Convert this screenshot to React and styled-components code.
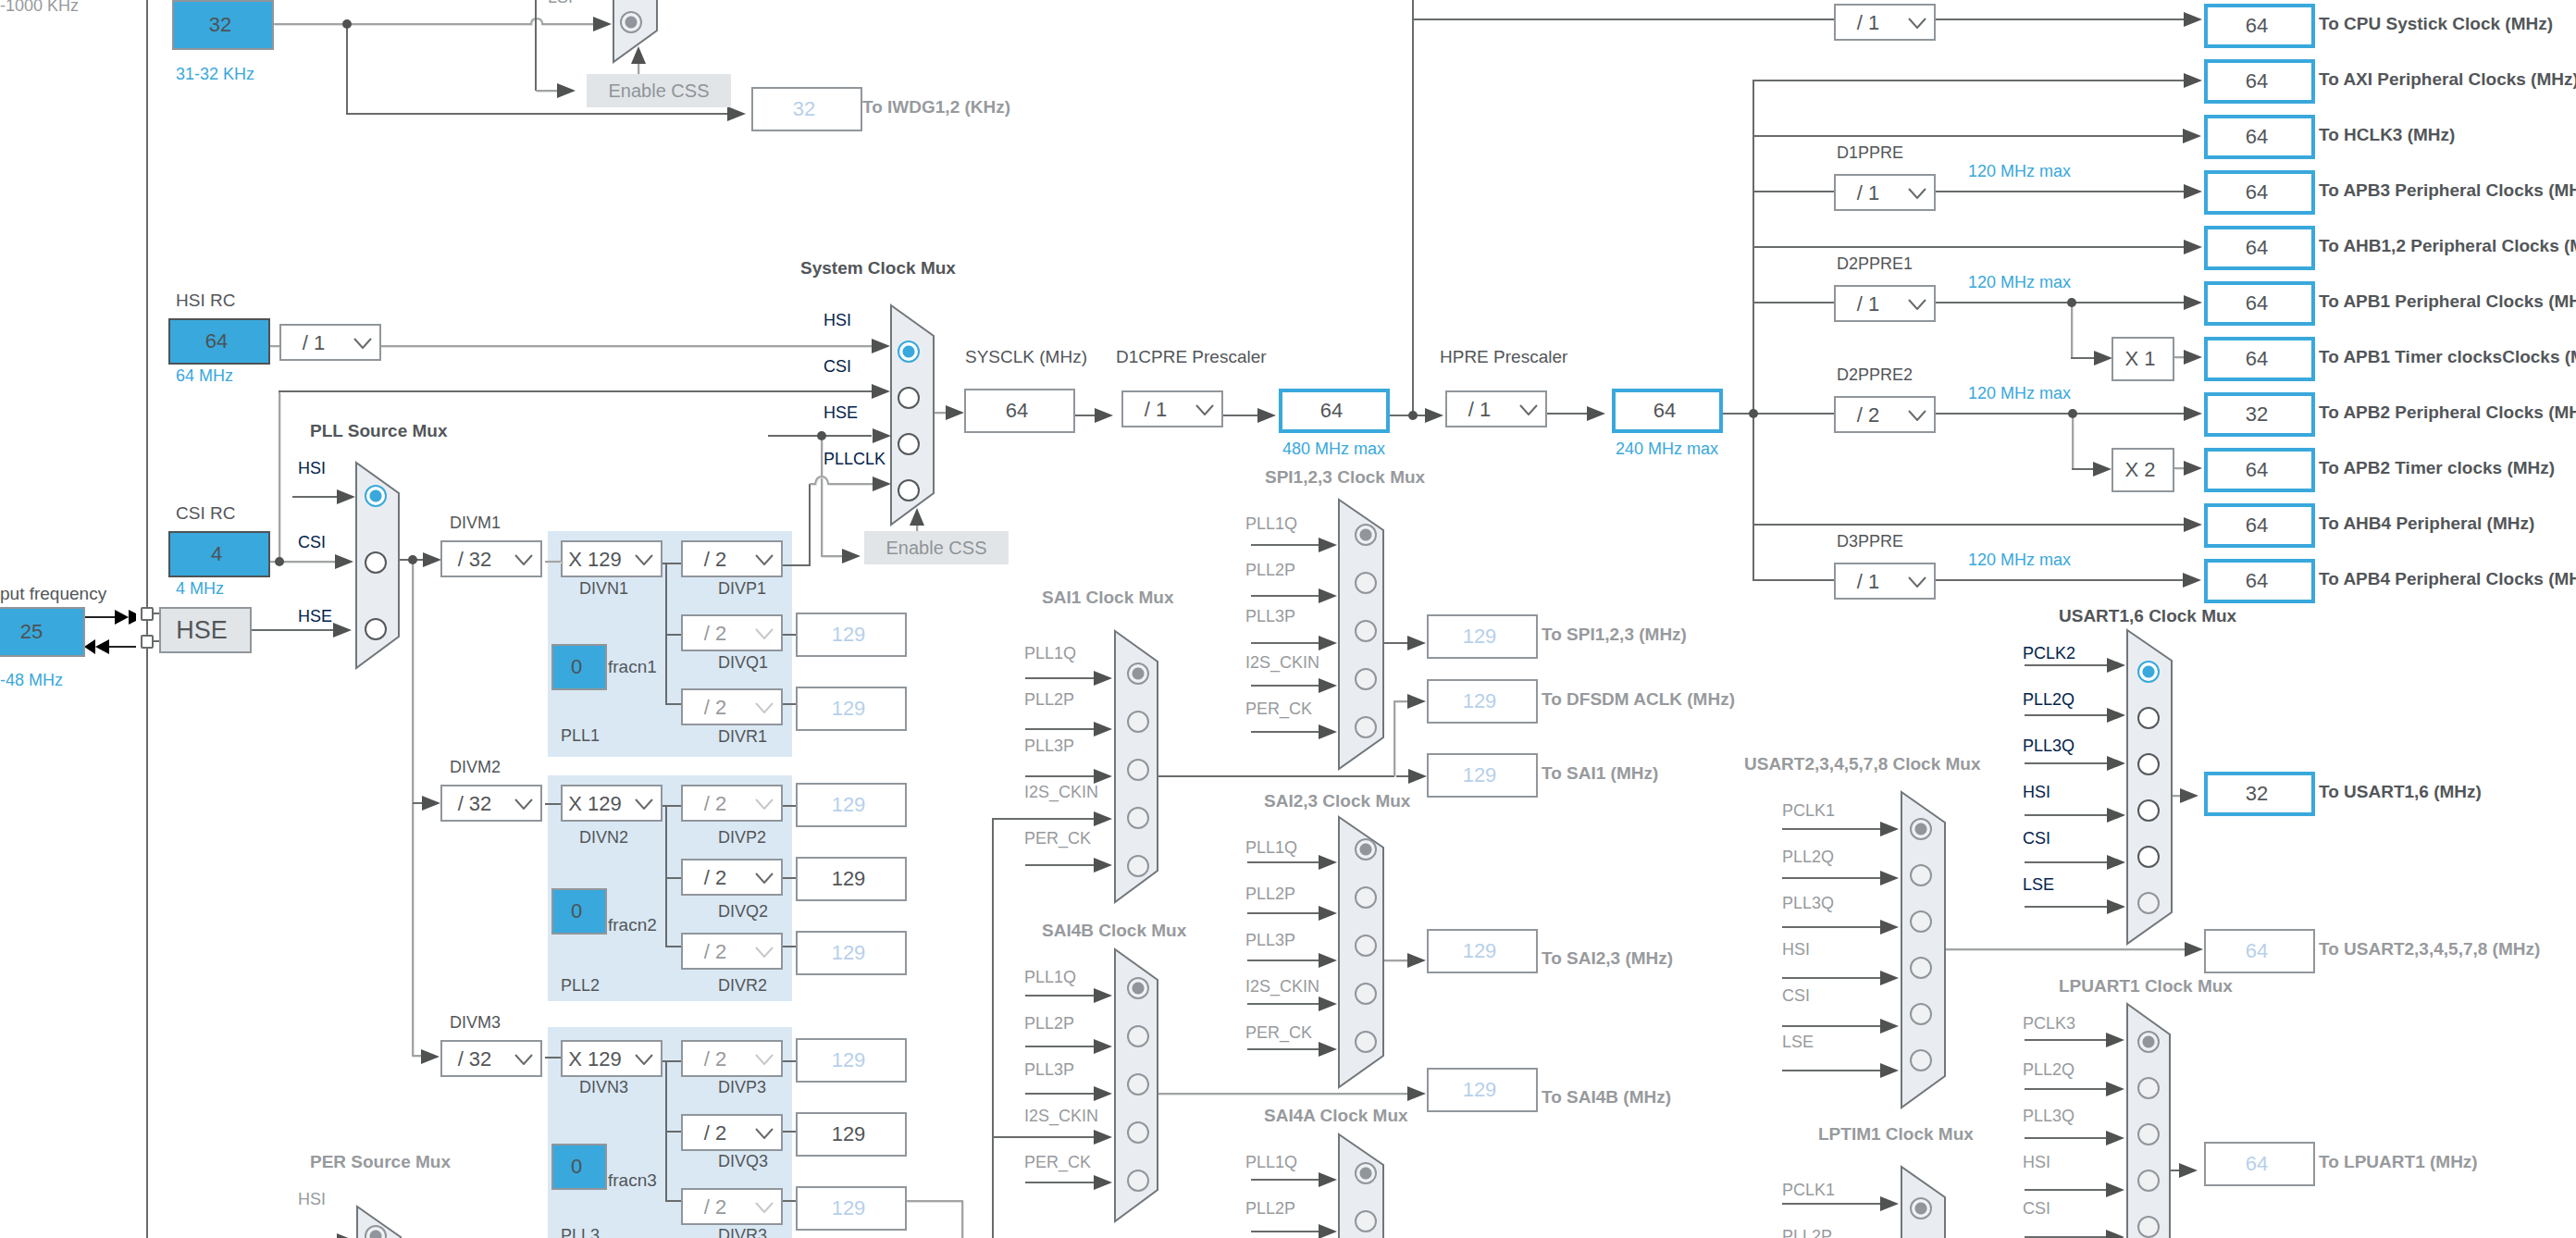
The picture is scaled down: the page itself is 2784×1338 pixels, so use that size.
import React, { useState } from 'react';
import styled, { createGlobalStyle, css } from 'styled-components';

const colors = {
  blue: '#39a8dc',
  navy: '#03234b',
  text: '#525659',
  muted: '#979a9d',
  pale: '#b7d0ea',
  border: '#90969b',
  wire: '#686b6b',
  arrow: '#4f5251',
  panel: '#dae8f4',
  mux: '#e9edf1',
  button: '#e1e5e8',
};

const GlobalStyle = createGlobalStyle`
  * {
    box-sizing: border-box;
  }

  body {
    margin: 0;
    background: #fff;
    font-family: "Liberation Sans", Arial, sans-serif;
  }

  input, select, button {
    margin: 0;
    padding: 0;
    font-family: inherit;
    border-radius: 0;
  }
`;

const Canvas = styled.main`
  position: relative;
  width: 100%;
  min-height: 100vh;
  overflow: hidden;
  background: #fff;
`;

// a block of the diagram, free on the canvas; its content flows inside it
const node = css`
  position: absolute;
  left: ${props => props.$x}px;
  top: ${props => props.$y}px;
  display: flex;
`;

const Wiring = styled.svg`
  position: absolute;
  inset: 0;
  width: 100%;
  height: 100%;
  fill: none;
  pointer-events: none;
`;

const Text = styled.label`
  color: ${props => colors[props.$tone || 'text']};
  font-size: ${props => (props.$wide ? 19 : 18)}px;
  font-weight: ${props => (props.$bold ? 700 : 400)};
  line-height: 20px;
  white-space: nowrap;
`;

const Field = styled.input`
  flex: none;
  width: ${props => props.$w || 120}px;
  height: ${props => props.$h || 48}px;
  padding-right: 6px;
  border: 2px solid ${colors.border};
  background: #fff;
  color: ${colors.text};
  font-size: 22px;
  text-align: center;
  outline: none;

  &:disabled {
    color: ${colors.pale};
    opacity: 1;
  }

  ${props => props.$kind === 'target' && css`
    border: 4px solid ${colors.blue};
  `}

  ${props => props.$kind === 'source' && css`
    background: ${colors.blue};
    border-color: ${props.$dark ? '#4d5356' : colors.border};
    color: #4d5356;
  `}
`;

const DividerBox = styled.div`
  position: relative;
  flex: none;
  width: 110px;
  height: 40px;

  select {
    width: 100%;
    height: 100%;
    padding-right: 36px;
    border: 2px solid ${colors.border};
    background: #fff;
    color: ${colors.text};
    font-size: 22px;
    text-align: center;
    text-align-last: center;
    appearance: none;
    outline: none;
  }

  select:disabled {
    color: ${colors.muted};
    opacity: 1;
  }

  svg {
    position: absolute;
    right: 10px;
    top: 15px;
    width: 20px;
    height: 12px;
    fill: none;
    stroke: ${props => (props.$off ? '#c6c9cb' : '#686b6b')};
    stroke-width: 2;
    pointer-events: none;
  }
`;

const Title = styled.div`
  ${node}
`;

const DividerNode = styled.div`
  ${node}
`;

const ButtonNode = styled.div`
  ${node}
`;

const CssButton = styled.button`
  width: 156px;
  height: 36px;
  border: none;
  background: ${colors.button};
  color: #8f9499;
  font-size: 20px;
`;

const HseButton = styled.button`
  width: 100px;
  height: 50px;
  padding-right: 8px;
  border: 2px solid ${colors.border};
  background: ${colors.button};
  color: ${colors.text};
  font-size: 27px;
`;

// oscillator: caption, frequency box, allowed range
const SourceBlock = styled.div`
  ${node}
  flex-direction: column;

  label {
    padding: 0 0 ${props => props.$above || 9}px ${props => props.$indent}px;
  }

  span {
    padding: ${props => props.$below || 2}px 0 0 ${props => props.$indent}px;
  }
`;

// SYSCLK -> D1CPRE -> HPRE row
const ClockChain = styled.section`
  ${node}
`;

const ChainStep = styled.div`
  display: flex;
  flex-direction: column;
  width: ${props => props.$w}px;
`;

const StepTitle = styled.div`
  height: 44px;
  margin-left: ${props => (props.$out ? -6 : 1)}px;
`;

const StepControl = styled.div`
  height: 55px;

  ${DividerBox} {
    margin-top: 2px;
  }
`;

const StepNote = styled.div`
  padding-left: 4px;
`;

const PrescalerList = styled.section`
  ${node}
  flex-direction: column;
  gap: 47px;
`;

const PrescalerRow = styled.div`
  display: flex;
  align-items: flex-start;
  gap: 35px;

  > div {
    display: flex;
    flex-direction: column;
    gap: 13px;
  }

  > div > label {
    padding-left: 3px;
  }

  > span {
    padding-top: 20px;
  }
`;

const MultiplierList = styled.section`
  ${node}
  flex-direction: column;
  gap: 72px;
`;

const PllSection = styled.section`
  ${node}
  align-items: flex-start;
`;

const DivmColumn = styled.div`
  display: flex;
  flex-direction: column;
  gap: 9px;
  width: 116px;

  label {
    padding-left: 10px;
  }
`;

const Panel = styled.div`
  display: flex;
  width: 264px;
  height: 244px;
  margin-top: ${props => props.$drop}px;
  padding-top: ${props => 29 - props.$drop}px;
  background: ${colors.panel};
`;

const MultiplierColumn = styled.div`
  display: flex;
  flex-direction: column;
  width: 144px;
  padding-left: 14px;
`;

const CaptionText = styled(Text)`
  padding-top: ${props => props.$gap}px;
  padding-left: ${props => props.$indent}px;
`;

const FracRow = styled.div`
  display: flex;
  align-items: ${props => (props.$low ? 'flex-end' : 'center')};
  gap: 1px;
  margin: ${props => props.$above}px 0 ${props => props.$below}px -10px;
`;

const PostDividers = styled.div`
  display: flex;
  flex-direction: column;
`;

const PostDivider = styled.div`
  display: flex;
  flex: none;
  flex-direction: column;
  height: 80px;
`;

const PllOutputs = styled.div`
  display: flex;
  flex-direction: column;
  gap: 32px;
  padding: 27px 0 0 4px;
`;

const EmptySlot = styled.div`
  height: 48px;
`;

const SignalList = styled.div`
  ${node}
  flex-direction: column;
  gap: ${props => props.$step - 20}px;
`;

const RadioList = styled.div`
  ${node}
  flex-direction: column;
  gap: ${props => props.$step - 24}px;
`;

const Radio = styled.input`
  width: 24px;
  height: 24px;
  appearance: none;
  border: 2px solid #55595c;
  border-radius: 50%;
  background: #fff;

  &:checked {
    border-color: ${colors.blue};
    background: radial-gradient(circle, ${colors.blue} 6px, #fff 7px);
  }

  &:disabled {
    border-color: ${colors.border};
    background: #f0f1f3;
  }

  &:disabled:checked {
    background: radial-gradient(circle, ${colors.border} 6px, #f0f1f3 7px);
  }
`;

const OutputList = styled.section`
  ${node}
  flex-direction: column;
  gap: 12px;
`;

const OutputRow = styled.div`
  display: flex;
  align-items: ${props => (props.$low ? 'flex-end' : 'center')};
  gap: ${props => (props.$tight ? 0 : 4)}px;

  label {
    padding-bottom: ${props => (props.$low ? 6 : 4)}px;
  }
`;

function Arrow({ x, y, up }) {
  const points = up
    ? `${x},${y} ${x - 8},${y + 19} ${x + 8},${y + 19}`
    : `${x},${y} ${x - 20},${y - 8} ${x - 20},${y + 8}`;
  return <polygon points={points} fill={colors.arrow} />;
}

function Wire({ d, soft }) {
  if (soft) {
    return (
      <>
        <path d={d} stroke="#dfe1e1" strokeWidth="2" transform="translate(1 1)" />
        <path d={d} stroke="#a2a4a4" strokeWidth="2" />
      </>
    );
  }
  return <path d={d} stroke={colors.wire} strokeWidth="2" />;
}

function Divider({ id, label, value, off }) {
  return (
    <DividerBox $off={off}>
      <select id={id} aria-label={label} defaultValue={value} disabled={off}>
        <option>{value}</option>
      </select>
      <svg viewBox="0 0 20 12">
        <path d="M1 1 L10 11 L19 1" />
      </svg>
    </DividerBox>
  );
}

function Mux({ data }) {
  const { id, title, titleX, titleY, labelX, labelY, labelStep = 50, radioX, radioY, radioStep = 50, signals, off, lastOff } = data;
  const [selected, setSelected] = useState(0);

  return (
    <div role="radiogroup" aria-label={title}>
      {title && (
        <Title $x={titleX} $y={titleY - 10}>
          <Text as="span" $bold $wide $tone={off ? 'muted' : 'text'}>{title}</Text>
        </Title>
      )}
      <SignalList $x={labelX} $y={labelY - 10} $step={labelStep}>
        {signals.map((signal, i) => (
          <Text key={signal} htmlFor={`${id}-${i}`} $tone={off ? 'muted' : 'navy'}>
            {signal}
          </Text>
        ))}
      </SignalList>
      <RadioList $x={radioX - 12} $y={radioY - 12} $step={radioStep}>
        {signals.map((signal, i) => (
          <Radio
            key={signal}
            type="radio"
            id={`${id}-${i}`}
            name={id}
            checked={selected === i}
            disabled={off || (lastOff && i === signals.length - 1)}
            onChange={() => setSelected(i)}
          />
        ))}
      </RadioList>
    </div>
  );
}

const kernel = ['PLL1Q', 'PLL2P', 'PLL3P', 'I2S_CKIN', 'PER_CK'];

// shape: [left, right, top, bottom]; inputs: [start, tip, [y, ...]]
const muxes = [
  {
    id: 'iwdg', signals: ['LSI'], labelX: 592, labelY: -3, radioX: 682, radioY: 24, off: true,
    shape: [663, 710, -80, 67],
  },
  {
    id: 'sys', title: 'System Clock Mux', titleX: 865, titleY: 290,
    labelX: 890, labelY: 346, radioX: 982, radioY: 380,
    signals: ['HSI', 'CSI', 'HSE', 'PLLCLK'],
    shape: [963, 1009, 330, 567],
  },
  {
    id: 'pllsrc', title: 'PLL Source Mux', titleX: 335, titleY: 466,
    labelX: 322, labelY: 506, labelStep: 80, radioX: 406, radioY: 536, radioStep: 72,
    signals: ['HSI', 'CSI', 'HSE'],
    shape: [385, 431, 500, 722],
  },
  {
    id: 'per', title: 'PER Source Mux', titleX: 335, titleY: 1256, off: true,
    labelX: 322, labelY: 1296, radioX: 406, radioY: 1336, signals: ['HSI'],
    shape: [386, 433, 1304, 1530], inputs: [316, 384, [1341]],
  },
  {
    id: 'spi', title: 'SPI1,2,3 Clock Mux', titleX: 1367, titleY: 516, off: true,
    labelX: 1346, labelY: 566, radioX: 1476, radioY: 578, radioStep: 52, signals: kernel,
    shape: [1447, 1495, 540, 831], inputs: [1352, 1445, [589, 644, 695, 741, 791]],
  },
  {
    id: 'sai1', title: 'SAI1 Clock Mux', titleX: 1126, titleY: 646, off: true,
    labelX: 1107, labelY: 706, radioX: 1230, radioY: 728, radioStep: 52, signals: kernel,
    shape: [1205, 1251, 682, 975], inputs: [1108, 1202, [733, 788, 839, 885, 935]],
  },
  {
    id: 'sai23', title: 'SAI2,3 Clock Mux', titleX: 1366, titleY: 866, off: true,
    labelX: 1346, labelY: 916, radioX: 1476, radioY: 918, radioStep: 52, signals: kernel,
    shape: [1447, 1495, 883, 1175], inputs: [1348, 1445, [932, 987, 1038, 1085, 1134]],
  },
  {
    id: 'sai4b', title: 'SAI4B Clock Mux', titleX: 1126, titleY: 1006, off: true,
    labelX: 1107, labelY: 1056, radioX: 1230, radioY: 1068, radioStep: 52, signals: kernel,
    shape: [1205, 1251, 1026, 1320], inputs: [1108, 1202, [1076, 1131, 1182, 1229, 1278]],
  },
  {
    id: 'sai4a', title: 'SAI4A Clock Mux', titleX: 1366, titleY: 1206, off: true,
    labelX: 1346, labelY: 1256, radioX: 1476, radioY: 1268, radioStep: 52, signals: ['PLL1Q', 'PLL2P'],
    shape: [1447, 1495, 1226, 1518], inputs: [1352, 1445, [1275, 1331]],
  },
  {
    id: 'usart2', title: 'USART2,3,4,5,7,8 Clock Mux', titleX: 1885, titleY: 826, off: true,
    labelX: 1926, labelY: 876, radioX: 2076, radioY: 896,
    signals: ['PCLK1', 'PLL2Q', 'PLL3Q', 'HSI', 'CSI', 'LSE'],
    shape: [2055, 2102, 856, 1197], inputs: [1926, 2052, [896, 949, 1002, 1057, 1109, 1157]],
  },
  {
    id: 'usart1', title: 'USART1,6 Clock Mux', titleX: 2225, titleY: 666, lastOff: true,
    labelX: 2186, labelY: 706, radioX: 2322, radioY: 726,
    signals: ['PCLK2', 'PLL2Q', 'PLL3Q', 'HSI', 'CSI', 'LSE'],
    shape: [2299, 2347, 681, 1020], inputs: [2188, 2297, [719, 773, 825, 881, 932, 980]],
  },
  {
    id: 'lpuart1', title: 'LPUART1 Clock Mux', titleX: 2225, titleY: 1066, off: true,
    labelX: 2186, labelY: 1106, radioX: 2322, radioY: 1126,
    signals: ['PCLK3', 'PLL2Q', 'PLL3Q', 'HSI', 'CSI'],
    shape: [2299, 2345, 1085, 1424], inputs: [2188, 2296, [1124, 1177, 1230, 1286, 1337]],
  },
  {
    id: 'lptim1', title: 'LPTIM1 Clock Mux', titleX: 1965, titleY: 1226, off: true,
    labelX: 1926, labelY: 1286, radioX: 2076, radioY: 1306, signals: ['PCLK1', 'PLL2P'],
    shape: [2055, 2102, 1261, 1600], inputs: [1926, 2052, [1301]],
  },
];

const wires = [
  // chip border
  { d: 'M159 0 V1400' },
  // LSI
  { d: 'M296 26 H574 Q574 20 580 20 Q586 20 586 26 H642', soft: true },
  { d: 'M375 26 V123 H788' },
  { d: 'M579 0 V98' },
  { d: 'M579 98 H602', soft: true },
  { d: 'M690 68 V80', soft: true },
  // HSI, CSI, HSE and PLLCLK into the system mux
  { d: 'M292 374 H942', soft: true },
  { d: 'M302 606 V424', soft: true },
  { d: 'M301 423 H942' },
  { d: 'M830 471 H942' },
  { d: 'M888 471 V601 H912', soft: true },
  { d: 'M846 611 H875 V523' },
  { d: 'M875 523 H881 Q882 515 888 515 Q894 515 895 523 H944', soft: true },
  { d: 'M991 566 V574', soft: true },
  { d: 'M1009 446 H1024', soft: true },
  { d: 'M1162 449 H1185' },
  { d: 'M1322 449 H1360' },
  { d: 'M1502 449 H1540' },
  { d: 'M1672 447 H1716' },
  { d: 'M1862 447 H2362' },
  // PLL sources
  { d: 'M316 537 H365' },
  { d: 'M292 607 H363', soft: true },
  { d: 'M272 681 H362' },
  { d: 'M431 605 H459' },
  { d: 'M446 605 V1141 H457', soft: true },
  { d: 'M446 868 H457' },
  // system and peripheral rails
  { d: 'M1527 0 V449' },
  { d: 'M1527 21 H2362' },
  { d: 'M1895 627 V87 H2362' },
  { d: 'M1895 147 H2362' },
  { d: 'M1895 207 H2362' },
  { d: 'M1895 267 H2362' },
  { d: 'M1895 327 H2362' },
  { d: 'M1895 567 H2362' },
  { d: 'M1894 627 H2362' },
  { d: 'M2239 327 V387', soft: true },
  { d: 'M2238 387 H2265' },
  { d: 'M2240 447 V507', soft: true },
  { d: 'M2239 507 H2264' },
  { d: 'M2350 386 H2362', soft: true },
  { d: 'M2350 506 H2362', soft: true },
  // kernel clocks
  { d: 'M1495 695 H1524' },
  { d: 'M1251 839 H1524' },
  { d: 'M1507 839 V758 H1524', soft: true },
  { d: 'M1495 1038 H1524', soft: true },
  { d: 'M1251 1182 H1524', soft: true },
  { d: 'M1110 885 H1073 V1400 M1073 1229 H1110' },
  { d: 'M980 1298 H1040 V1400', soft: true },
  { d: 'M2102 1026 H2364', soft: true },
  { d: 'M2347 860 H2358', soft: true },
  { d: 'M2345 1265 H2358' },
];

const arrows = [
  [661, 26], [806, 123], [622, 98],
  [962, 374], [962, 423], [963, 471], [963, 523], [930, 601],
  [1042, 446], [1203, 449], [1379, 449], [1560, 449], [1735, 447],
  [384, 537], [382, 607], [380, 681], [477, 605], [476, 868], [475, 1142],
  [2380, 21], [2380, 87], [2379, 147], [2380, 207], [2380, 267], [2380, 327],
  [2380, 386], [2380, 447], [2380, 506], [2380, 567], [2379, 627],
  [2283, 387], [2282, 507],
  [1541, 695], [1541, 758], [1542, 839], [1541, 1038], [1541, 1182],
  [2381, 1026], [2376, 860], [2375, 1265],
];

const dots = [
  [375, 26], [888, 471], [302, 607], [446, 605],
  [1527, 449], [1895, 447], [2239, 327], [2240, 447],
];

const outputGroups = [
  {
    x: 2382,
    y: 4,
    items: [
      { id: 'systick', value: 64, label: 'To CPU Systick Clock (MHz)' },
      { id: 'axi', value: 64, label: 'To AXI Peripheral Clocks (MHz)' },
      { id: 'hclk3', value: 64, label: 'To HCLK3 (MHz)' },
      { id: 'apb3', value: 64, label: 'To APB3 Peripheral Clocks (MHz)' },
      { id: 'ahb12', value: 64, label: 'To AHB1,2 Peripheral Clocks (MHz)' },
      { id: 'apb1', value: 64, label: 'To APB1 Peripheral Clocks (MHz)' },
      { id: 'apb1t', value: 64, label: 'To APB1 Timer clocksClocks (MHz)' },
      { id: 'apb2', value: 32, label: 'To APB2 Peripheral Clocks (MHz)' },
      { id: 'apb2t', value: 64, label: 'To APB2 Timer clocks (MHz)' },
      { id: 'ahb4', value: 64, label: 'To AHB4 Peripheral (MHz)' },
      { id: 'apb4', value: 64, label: 'To APB4 Peripheral Clocks (MHz)' },
    ],
  },
  { x: 2382, y: 834, items: [{ id: 'out-usart1', value: 32, label: 'To USART1,6 (MHz)' }] },
  { x: 2382, y: 1004, items: [{ id: 'out-usart2', value: 64, label: 'To USART2,3,4,5,7,8 (MHz)', off: true }] },
  { x: 2382, y: 1234, items: [{ id: 'out-lpuart1', value: 64, label: 'To LPUART1 (MHz)', off: true }] },
  { x: 1542, y: 664, items: [{ id: 'out-spi', value: 129, label: 'To SPI1,2,3 (MHz)', off: true }] },
  { x: 1542, y: 734, items: [{ id: 'out-dfsdm', value: 129, label: 'To DFSDM ACLK (MHz)', off: true }] },
  { x: 1542, y: 814, items: [{ id: 'out-sai1', value: 129, label: 'To SAI1 (MHz)', off: true }] },
  { x: 1542, y: 1004, items: [{ id: 'out-sai23', value: 129, label: 'To SAI2,3 (MHz)', off: true, low: true }] },
  { x: 1542, y: 1154, items: [{ id: 'out-sai4b', value: 129, label: 'To SAI4B (MHz)', off: true, low: true }] },
  { x: 812, y: 94, items: [{ id: 'out-iwdg', value: 32, label: 'To IWDG1,2 (KHz)', off: true, tight: true }] },
];

const prescalerGroups = [
  {
    y: 155,
    items: [
      { id: 'd1ppre', label: 'D1PPRE', value: '/ 1' },
      { id: 'd2ppre1', label: 'D2PPRE1', value: '/ 1' },
      { id: 'd2ppre2', label: 'D2PPRE2', value: '/ 2' },
    ],
  },
  { y: 575, items: [{ id: 'd3ppre', label: 'D3PPRE', value: '/ 1' }] },
];

// on: enabled P, Q and R outputs; wires: y of the link into DIVN and of the P, Q, R links
const plls = [
  {
    n: 1, y: 555, drop: 19, captionGap: 2, fracAbove: 50, fracBelow: 39,
    on: [true, false, false], wires: [607, 609, 686, 761], direct: true,
  },
  {
    n: 2, y: 819, drop: 19, captionGap: 7, fracAbove: 45, fracBelow: 45, low: true,
    on: [false, true, false], wires: [869, 871, 949, 1023],
  },
  {
    n: 3, y: 1095, drop: 15, captionGap: 1, fracAbove: 51, fracBelow: 39, low: true,
    on: [false, true, false], wires: [1143, 1147, 1223, 1298],
  },
];

const letters = ['P', 'Q', 'R'];

function Pll({ pll }) {
  const { n, y, drop, captionGap, fracAbove, fracBelow, low, on, direct } = pll;
  return (
    <PllSection $x={476} $y={y}>
      <DivmColumn>
        <Text htmlFor={`divm${n}`}>{`DIVM${n}`}</Text>
        <Divider id={`divm${n}`} value="/ 32" />
      </DivmColumn>
      <Panel $drop={drop}>
        <MultiplierColumn>
          <Divider id={`divn${n}`} value="X 129" />
          <CaptionText htmlFor={`divn${n}`} $gap={captionGap} $indent={20}>{`DIVN${n}`}</CaptionText>
          <FracRow $above={fracAbove} $below={fracBelow} $low={low}>
            <Field id={`fracn${n}`} $kind="source" $w={60} $h={50} defaultValue="0" />
            <Text htmlFor={`fracn${n}`} $wide>{`fracn${n}`}</Text>
          </FracRow>
          <Text as="span">{`PLL${n}`}</Text>
        </MultiplierColumn>
        <PostDividers>
          {letters.map((letter, i) => (
            <PostDivider key={letter}>
              <Divider id={`div${letter}${n}`} value="/ 2" off={!on[i]} />
              <CaptionText htmlFor={`div${letter}${n}`} $gap={captionGap} $indent={40}>
                {`DIV${letter}${n}`}
              </CaptionText>
            </PostDivider>
          ))}
        </PostDividers>
      </Panel>
      <PllOutputs>
        {letters.map((letter, i) => (
          direct && i === 0 ? <EmptySlot key={letter} /> : (
            <Field
              key={letter}
              aria-label={`PLL${n}${letter} frequency`}
              value="129"
              readOnly
              disabled={!on[i]}
            />
          )
        ))}
      </PllOutputs>
    </PllSection>
  );
}

function Schematic() {
  return (
    <Wiring aria-hidden="true">
      {wires.map(wire => <Wire key={wire.d} {...wire} />)}
      {plls.map(({ n, direct, wires: [input, p, q, r] }) => (
        <g key={n}>
          <Wire d={`M589 ${input} H606`} soft={direct} />
          <Wire d={`M716 ${p} H736 M720 ${p} V${r} H736 M720 ${q} H736`} />
          {!direct && <Wire d={`M846 ${p} H860`} />}
          <Wire d={`M846 ${q} H860 M846 ${r} H860`} />
        </g>
      ))}
      {muxes.map(({ id, inputs, shape: [l, r, t, b] }) => (
        <g key={id}>
          {inputs && inputs[2].map(y => (
            <g key={y}>
              <Wire d={`M${inputs[0]} ${y} H${inputs[1] - 18}`} />
              <Arrow x={inputs[1]} y={y} />
            </g>
          ))}
          <path
            d={`M${l} ${t} L${r} ${t + 33} V${b - 34} L${l} ${b} Z`}
            fill={colors.mux}
            stroke="#70767a"
            strokeWidth="2"
          />
        </g>
      ))}
      {arrows.map(([x, y]) => <Arrow key={`${x}-${y}`} x={x} y={y} />)}
      <Arrow x={690} y={50} up />
      <Arrow x={991} y={549} up />
      {dots.map(([x, y]) => <circle key={`${x}-${y}`} cx={x} cy={y} r="5" fill={colors.arrow} />)}
      {/* oscillator pins */}
      <path d="M92 667 H126 M116 699 H147" stroke="#222" strokeWidth="2" />
      <path d="M124 659 L139 667 L124 675 Z M139 659 L147 663 V671 L139 675 Z" fill="#000" />
      <path d="M103 691 L91 699 L103 707 Z M118 691 L103 699 L118 707 Z" fill="#000" />
      <path d="M165 663 H172 M165 693 H172" stroke={colors.wire} strokeWidth="2" />
      <rect x="153" y="657" width="12" height="13" rx="1" fill="#fff" stroke={colors.wire} strokeWidth="2" />
      <rect x="153" y="687" width="12" height="13" rx="1" fill="#fff" stroke={colors.wire} strokeWidth="2" />
    </Wiring>
  );
}

function Sources() {
  return (
    <>
      <Title $x={0} $y={-4}>
        <Text as="span" $tone="muted">-1000 KHz</Text>
      </Title>
      <SourceBlock $x={186} $y={0} $indent={4} $below={16}>
        <Field aria-label="LSI RC" $kind="source" $w={110} $h={54} defaultValue="32" />
        <Text as="span" $tone="blue">31-32 KHz</Text>
      </SourceBlock>
      <SourceBlock $x={182} $y={315} $indent={8}>
        <Text htmlFor="hsi" $wide>HSI RC</Text>
        <Field id="hsi" $kind="source" $dark $w={110} $h={50} defaultValue="64" />
        <Text as="span" $tone="blue">64 MHz</Text>
      </SourceBlock>
      <SourceBlock $x={182} $y={545} $indent={8}>
        <Text htmlFor="csi" $wide>CSI RC</Text>
        <Field id="csi" $kind="source" $dark $w={110} $h={50} defaultValue="4" />
        <Text as="span" $tone="blue">4 MHz</Text>
      </SourceBlock>
      <SourceBlock $x={-18} $y={632} $indent={18} $above={4} $below={15}>
        <Text htmlFor="hse" $wide>put frequency</Text>
        <Field id="hse" $kind="source" $w={110} $h={54} defaultValue="25" />
        <Text as="span" $tone="blue">-48 MHz</Text>
      </SourceBlock>
      <ButtonNode $x={172} $y={656}>
        <HseButton type="button">HSE</HseButton>
      </ButtonNode>
      <DividerNode $x={302} $y={350}>
        <Divider id="hsidiv" label="HSI divider" value="/ 1" />
      </DividerNode>
    </>
  );
}

function SystemClock() {
  return (
    <ClockChain $x={1042} $y={376}>
      <ChainStep $w={170}>
        <StepTitle><Text htmlFor="sysclk" $wide>SYSCLK (MHz)</Text></StepTitle>
        <StepControl><Field id="sysclk" value="64" readOnly /></StepControl>
      </ChainStep>
      <ChainStep $w={170}>
        <StepTitle $out><Text htmlFor="d1cpre" $wide>D1CPRE Prescaler</Text></StepTitle>
        <StepControl><Divider id="d1cpre" value="/ 1" /></StepControl>
      </ChainStep>
      <ChainStep $w={180}>
        <StepTitle />
        <StepControl><Field id="d1clk" $kind="target" defaultValue="64" /></StepControl>
        <StepNote><Text htmlFor="d1clk" $tone="blue">480 MHz max</Text></StepNote>
      </ChainStep>
      <ChainStep $w={180}>
        <StepTitle $out><Text htmlFor="hpre" $wide>HPRE Prescaler</Text></StepTitle>
        <StepControl><Divider id="hpre" value="/ 1" /></StepControl>
      </ChainStep>
      <ChainStep $w={120}>
        <StepTitle />
        <StepControl><Field id="hclk" $kind="target" defaultValue="64" /></StepControl>
        <StepNote><Text htmlFor="hclk" $tone="blue">240 MHz max</Text></StepNote>
      </ChainStep>
    </ClockChain>
  );
}

function App() {
  return (
    <Canvas>
      <GlobalStyle />
      {plls.map(pll => <Pll key={pll.n} pll={pll} />)}
      <Schematic />
      <Sources />
      <SystemClock />

      <ButtonNode $x={634} $y={80}>
        <CssButton type="button" disabled>Enable CSS</CssButton>
      </ButtonNode>
      <ButtonNode $x={934} $y={574}>
        <CssButton type="button" disabled>Enable CSS</CssButton>
      </ButtonNode>

      <DividerNode $x={1982} $y={4}>
        <Divider id="systickdiv" label="Systick divider" value="/ 1" />
      </DividerNode>
      {prescalerGroups.map(({ y, items }) => (
        <PrescalerList key={y} $x={1982} $y={y}>
          {items.map(({ id, label, value }) => (
            <PrescalerRow key={id}>
              <div>
                <Text htmlFor={id}>{label}</Text>
                <Divider id={id} value={value} />
              </div>
              <Text as="span" $tone="blue">120 MHz max</Text>
            </PrescalerRow>
          ))}
        </PrescalerList>
      ))}
      <MultiplierList $x={2282} $y={364}>
        <Field aria-label="APB1 timer multiplier" $w={68} value="X 1" readOnly />
        <Field aria-label="APB2 timer multiplier" $w={68} value="X 2" readOnly />
      </MultiplierList>

      {muxes.map(mux => <Mux key={mux.id} data={mux} />)}

      {outputGroups.map(({ x, y, items }) => (
        <OutputList key={`${x}-${y}`} $x={x} $y={y}>
          {items.map(({ id, value, label, off, low, tight }) => (
            <OutputRow key={id} $low={low} $tight={tight}>
              <Field id={id} $kind={off ? undefined : 'target'} defaultValue={value} disabled={off} />
              <Text htmlFor={id} $bold $wide $tone={off ? 'muted' : 'text'}>{label}</Text>
            </OutputRow>
          ))}
        </OutputList>
      ))}
    </Canvas>
  );
}

export default App;
